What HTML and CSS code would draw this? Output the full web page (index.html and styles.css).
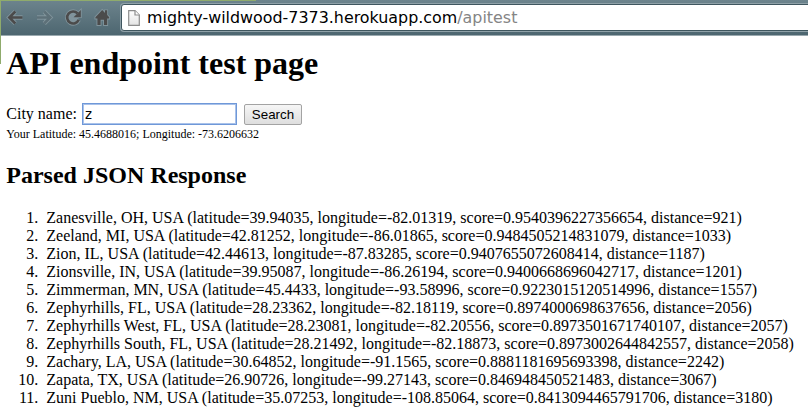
FILE: index.html
```html
<!DOCTYPE html>
<html lang="en">
<head>
<meta charset="utf-8">
<title>API endpoint test page</title>
<link rel="stylesheet" href="styles.css">
</head>
<body>
<header class="toolbar">
  <svg class="nav" width="112" height="35" viewBox="0 0 112 35">
    <defs>
      <g id="back"><path d="M9.500 17.500H22.500M15.300 11.500L9.300 17.500l6 6"/></g>
      <g id="forward"><path d="M37 17.500H50M44.200 11.500l6 6-6 6"/></g>
      <g id="reload"><path d="M77.600 13.400A6 6 0 1 0 78.700 19.800"/></g>
      <path id="reload-tip" d="M80.800 10v7.200h-7.200z"/>
      <path id="home" d="M102.200 10l2.800 2.900V10.300h2.200v4.800l2 2.100v1.300h-2V25h-3.200v-5.200h-3.400V25h-3.200v-6.500h-2v-1.300z"/>
    </defs>
    <g class="nav-halo line"><use href="#back"/><use href="#forward"/><use href="#reload"/></g>
    <g class="nav-halo solid"><use href="#reload-tip"/><use href="#home"/></g>
    <g class="nav-ink line"><use href="#back"/><use href="#reload"/></g>
    <g class="nav-ink solid"><use href="#reload-tip"/><use href="#home"/></g>
    <g class="nav-off line"><use href="#forward"/></g>
  </svg>
  <div class="address">
    <svg class="doc" width="12" height="16" viewBox="0 0 12 16">
      <defs><linearGradient id="paper" x2="0" y2="1"><stop stop-color="#fff"/><stop offset="1" stop-color="#e4e4e4"/></linearGradient></defs>
      <path d="M.7.700h6.300l4.300 4.300v10.300H.7z" fill="url(#paper)" stroke="#8d8d8d" stroke-width="1.200"/>
      <path d="M7 .7V5h4.300" fill="#fff" stroke="#8d8d8d" stroke-width="1.200"/>
    </svg>
    <span class="url">mighty-wildwood-7373.herokuapp.com<span class="path">/apitest</span></span>
  </div>
</header>
<div class="edge"></div>
<main>
  <h1>API endpoint test page</h1>
  <form class="search">
    <label for="city">City name:</label>
    <input id="city" class="city" type="text" value="z">
    <button class="submit" type="button">Search</button>
  </form>
  <div class="position">Your Latitude: 45.4688016; Longitude: -73.6206632</div>
  <h2>Parsed JSON Response</h2>
  <ol>
    <li>Zanesville, OH, USA (latitude=39.94035, longitude=-82.01319, score=0.9540396227356654, distance=921)</li>
    <li>Zeeland, MI, USA (latitude=42.81252, longitude=-86.01865, score=0.9484505214831079, distance=1033)</li>
    <li>Zion, IL, USA (latitude=42.44613, longitude=-87.83285, score=0.9407655072608414, distance=1187)</li>
    <li>Zionsville, IN, USA (latitude=39.95087, longitude=-86.26194, score=0.9400668696042717, distance=1201)</li>
    <li>Zimmerman, MN, USA (latitude=45.4433, longitude=-93.58996, score=0.9223015120514996, distance=1557)</li>
    <li>Zephyrhills, FL, USA (latitude=28.23362, longitude=-82.18119, score=0.8974000698637656, distance=2056)</li>
    <li>Zephyrhills West, FL, USA (latitude=28.23081, longitude=-82.20556, score=0.8973501671740107, distance=2057)</li>
    <li>Zephyrhills South, FL, USA (latitude=28.21492, longitude=-82.18873, score=0.8973002644842557, distance=2058)</li>
    <li>Zachary, LA, USA (latitude=30.64852, longitude=-91.1565, score=0.8881181695693398, distance=2242)</li>
    <li>Zapata, TX, USA (latitude=26.90726, longitude=-99.27143, score=0.846948450521483, distance=3067)</li>
    <li>Zuni Pueblo, NM, USA (latitude=35.07253, longitude=-108.85064, score=0.8413094465791706, distance=3180)</li>
  </ol>
</main>
</body>
</html>
```
FILE: styles.css
```css
* { box-sizing: border-box; }
body {
  margin: 0;
  height: 418px;
  overflow: hidden;
  background: #fff;
  color: #000;
  font: 16px/18px "Liberation Serif", serif;
}
.toolbar {
  display: flex;
  height: 36px;
  background: linear-gradient(#6d848d, #4d6670);
  border-bottom: 1px solid #9aa9af;
}
.nav { flex: none; margin-right: 9px; }
.line { fill: none; stroke-width: 2.600px; }
.solid { stroke: none; }
.nav-halo { fill: #80949c; stroke: #80949c; }
.nav-halo.line { stroke-width: 4.400px; }
.nav-halo.solid { stroke: #80949c; stroke-width: 1.800px; }
.nav-ink.line { stroke: #4b4b4b; }
.nav-ink.solid { fill: #4b4b4b; }
.nav-off { stroke: #5d7078; }
.address {
  flex: 1;
  display: flex;
  align-items: center;
  height: 27px;
  margin-top: 4px;
  margin-right: -6px;
  padding-left: 6px;
  background: #fff;
  border: 1px solid #3f565f;
  border-radius: 3px;
  box-shadow: 0 0 0 1px #8fa1a8;
}
.doc { flex: none; margin-right: 7px; }
.url { font: 15.9px/20px "DejaVu Sans", sans-serif; white-space: nowrap; }
.path { color: #858585; }
/* Window outline that overlaps the corner of the page */
.edge {
  position: absolute;
  top: 0;
  left: 0;
  width: 256px;
  height: 64px;
  border: solid #8fab6c;
  border-width: 1px 0 0 1px;
}
main { padding: 0 6.300px; }
h1 { margin: 9px 0 21px; font-size: 32px; line-height: 37px; }
.search { display: flex; align-items: center; height: 22px; }
.city {
  width: 155px;
  height: 22px;
  margin: 0 7px 0 5px;
  padding: 1px 2px;
  border: 1px solid #6f98d8;
  outline: 1px solid #a9c2ea;
  outline-offset: -2px;
  font: 13.333px "DejaVu Sans", sans-serif;
}
.submit {
  width: 58px;
  height: 21px;
  padding: 0;
  border: 1px solid #a3a3a3;
  border-radius: 2px;
  background: linear-gradient(#f6f6f6, #dedede);
  color: #000;
  font: 13.333px "Liberation Sans", sans-serif;
}
.position { font-size: 12px; line-height: 15px; margin-top: 2px; }
h2 { margin: 20px 0; font-size: 24px; line-height: 27px; }
ol { margin: 0; padding: 0; list-style: none; counter-reset: city; }
li { display: grid; grid-template-columns: 32px 1fr; column-gap: 8px; counter-increment: city; }
li::before { content: counter(city) "."; text-align: right; }
```
